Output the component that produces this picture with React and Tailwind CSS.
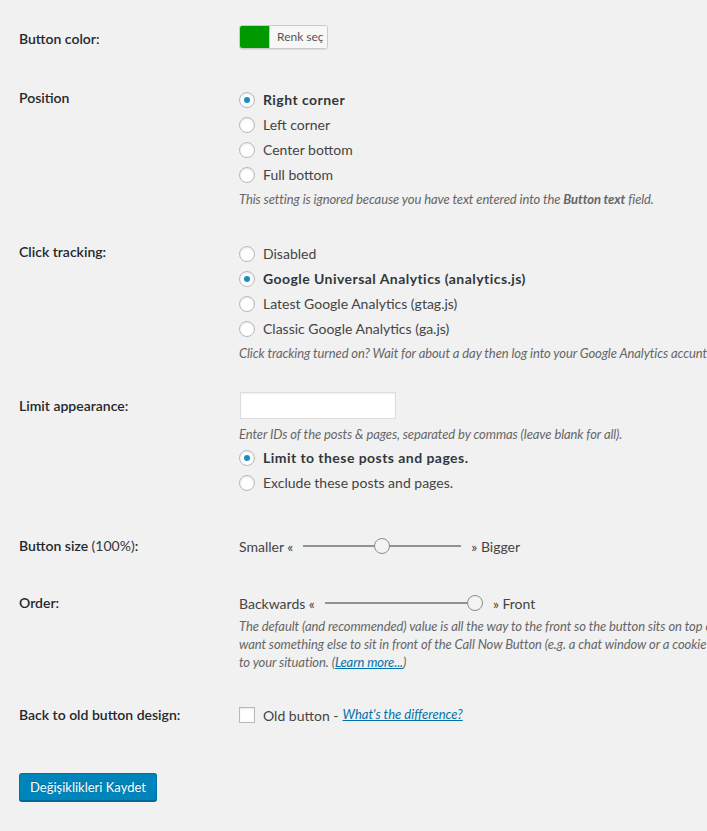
import React from "react";

const FONT = { fontFamily: "Lato, 'Noto Sans', sans-serif" };

function Radio({ checked, children }) {
  return (
    <div className="flex items-center h-[25px]">
      <span className="w-4 h-4 rounded-full border border-[#b4b9be] bg-white shadow-[inset_0_1px_2px_rgba(0,0,0,0.1)] flex items-center justify-center shrink-0">
        {checked && <span className="w-[6px] h-[6px] rounded-full bg-[#1e8cbe]" />}
      </span>
      <span className={"ml-2 whitespace-nowrap " + (checked ? "font-bold tracking-[0.45px] text-[#32373c]" : "text-[#444]")}>{children}</span>
    </div>
  );
}

function Row({ label, h, children, tdPt = "pt-[15px]" }) {
  return (
    <div className="flex" style={{ height: h }}>
      <div className="w-[220px] shrink-0 pt-[20px] text-[14px] leading-[18px] font-semibold text-[#23282d]">{label}</div>
      <div className={"text-[14px] text-[#444] " + tdPt}>{children}</div>
    </div>
  );
}

function Desc({ children, className = "" }) {
  return <div className={"text-[13px] italic leading-[18px] tracking-[-0.1px] text-[#666] whitespace-nowrap " + className}>{children}</div>;
}

function Slider({ left, right, pct }) {
  return (
    <div className="flex items-center h-[28px] whitespace-nowrap">
      <span>{left}</span>
      <div className="relative w-[158px] h-4 mx-[10px] flex items-center">
        <div className="w-full h-[2px] bg-[#929292]" />
        <div
          className="absolute top-0 w-4 h-4 rounded-full border-[1.5px] border-[#8d8d8d] bg-[#f3f3f3]"
          style={{ left: (158 - 16) * pct }}
        />
      </div>
      <span>{right}</span>
    </div>
  );
}

export default function App() {
  return (
    <div className="w-[707px] h-[831px] overflow-hidden bg-[#f1f1f1]" style={FONT}>
      <div className="pl-[19px] pt-[10px] w-[1100px]">
        <Row label="Button color:" h={59}>
          <div className="flex h-6 w-[89px] border border-[#c5cfc3] rounded-[3px] overflow-hidden shadow-[0_1px_0_#ddd]">
            <div className="w-[30px] bg-[#009900] border-r border-[#c5c5c5]" />
            <div className="flex-1 bg-[#f7f7f7] text-[12px] leading-[22px] text-[#555] pl-[7px] whitespace-nowrap overflow-hidden">Renk seç</div>
          </div>
        </Row>

        <Row label="Position" h={154}>
          <div className="pt-[3px]">
            <Radio checked>Right corner</Radio>
            <Radio>Left corner</Radio>
            <Radio>Center bottom</Radio>
            <Radio>Full bottom</Radio>
          </div>
          <Desc className="mt-[3px]">
            This setting is ignored because you have text entered into the <span className="font-bold">Button text</span> field.
          </Desc>
        </Row>

        <Row label="Click tracking:" h={154}>
          <div className="pt-[3px]">
            <Radio>Disabled</Radio>
            <Radio checked>Google Universal Analytics (analytics.js)</Radio>
            <Radio>Latest Google Analytics (gtag.js)</Radio>
            <Radio>Classic Google Analytics (ga.js)</Radio>
          </div>
          <Desc className="mt-[3px]">
            Click tracking turned on? Wait for about a day then log into your Google Analytics accunt and go to Events in the Behavior section.
          </Desc>
        </Row>

        <Row label="Limit appearance:" h={140}>
          <div className="w-[156px] h-[27px] ml-px bg-white border border-[#ddd] shadow-[inset_0_1px_2px_rgba(0,0,0,0.07)]" />
          <Desc className="mt-[6px]">Enter IDs of the posts &amp; pages, separated by commas (leave blank for all).</Desc>
          <div className="mt-[2px]">
            <Radio checked>Limit to these posts and pages.</Radio>
            <Radio>Exclude these posts and pages.</Radio>
          </div>
        </Row>

        <Row
          label={
            <span>
              Button size <span className="font-normal text-[#32373c]">(100%)</span>:
            </span>
          }
          h={57}
        >
          <Slider left="Smaller «" right="» Bigger" pct={0.5} />
        </Row>

        <Row label="Order:" h={112}>
          <Slider left="Backwards «" right="» Front" pct={1} />
          <Desc>
            The default (and recommended) value is all the way to the front so the button sits on top of everything else. In case you have a specific usecase where you
            <br />
            want something else to sit in front of the Call Now Button (e.g. a chat window or a cookie notice) you can move this backwards one step at a time to adapt it
            <br />
            to your situation. (<span className="text-[#0073aa] underline">Learn more...</span>)
          </Desc>
        </Row>

        <Row label="Back to old button design:" h={58} tdPt="pt-[20px]">
          <div className="flex items-center h-[18px] whitespace-nowrap">
            <span className="w-4 h-4 border border-[#b4b9be] bg-white shadow-[inset_0_1px_2px_rgba(0,0,0,0.1)] shrink-0" />
            <span className="ml-2">Old button - </span>
            <span className="ml-1 italic text-[13px] text-[#0073aa] underline">What's the difference?</span>
          </div>
        </Row>

        <div className="mt-[29px]">
          <button className="h-[28px] px-[10px] rounded-[3px] bg-[#0085ba] border border-[#0073aa] border-b-[#006799] shadow-[0_1px_0_#006799] text-white text-[13px] leading-[26px] [text-shadow:0_-1px_1px_#006799]">
            Değişiklikleri Kaydet
          </button>
        </div>
      </div>
    </div>
  );
}
